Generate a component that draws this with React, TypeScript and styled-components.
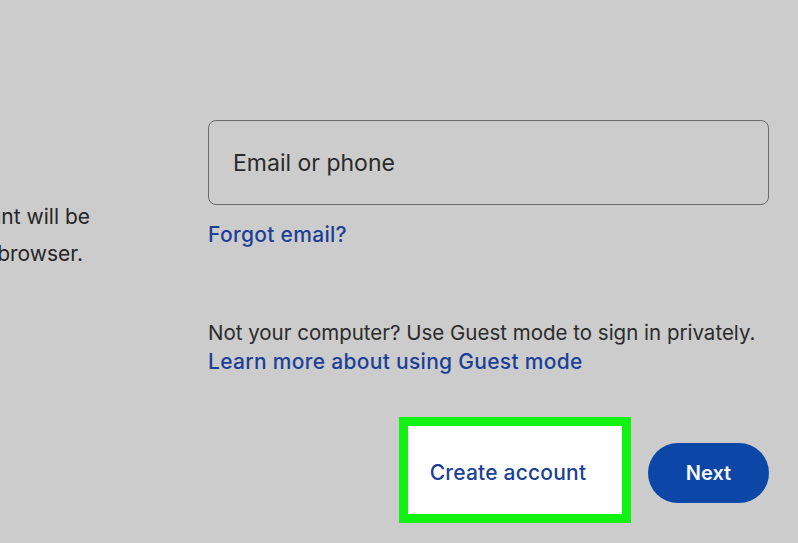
import React from "react";
import styled, { createGlobalStyle } from "styled-components";

const Global = createGlobalStyle`
  html, body {
    margin: 0;
    padding: 0;
    background: #cccccc;
    overflow: hidden;
  }
  body {
    font-family: Inter, Roboto, Arial, sans-serif;
    -webkit-font-smoothing: antialiased;
  }
`;

const Page = styled.main`
  width: 798px;
  height: 543px;
  background: #cccccc;
  display: flex;
  align-items: flex-start;
  overflow: hidden;
`;

const Intro = styled.div`
  width: 90px;
  margin-right: 118px;
  margin-top: 198px;
  display: flex;
  flex-direction: column;
  align-items: flex-end;
`;

const IntroLine = styled.span<{ $inset?: number }>`
  display: block;
  white-space: nowrap;
  font-size: 21px;
  line-height: 37px;
  color: #262626;
  margin-right: ${(p) => p.$inset ?? 0}px;
`;

const Form = styled.section`
  width: 561px;
  margin-top: 120px;
  display: flex;
  flex-direction: column;
`;

const Field = styled.div`
  box-sizing: border-box;
  height: 85px;
  border: 1.5px solid #6b6b6b;
  border-radius: 8px;
  display: flex;
  align-items: center;
  padding-left: 24px;
  font-size: 23px;
  color: #2a2a2a;
`;

const LinkText = styled.a`
  display: block;
  font-size: 21px;
  font-weight: 500;
  letter-spacing: 0.3px;
  color: #1c3f96;
  text-decoration: none;
  line-height: 29px;
`;

const Forgot = styled(LinkText)`
  margin-top: 15px;
  align-self: flex-start;
`;

const Guest = styled.div`
  margin-top: 69px;
  display: flex;
  flex-direction: column;
`;

const GuestText = styled.p`
  margin: 0;
  font-size: 20.5px;
  line-height: 29px;
  color: #2b2b2b;
`;

const Actions = styled.div`
  margin-top: 41px;
  display: flex;
  justify-content: flex-end;
  align-items: center;
  gap: 17px;
`;

const Highlight = styled.div`
  box-sizing: border-box;
  width: 232px;
  height: 106px;
  border: 9px solid #12f212;
  background: #ffffff;
  display: flex;
  align-items: center;
  justify-content: center;
`;

const TextButton = styled.button`
  border: none;
  background: transparent;
  font-family: inherit;
  font-size: 21px;
  font-weight: 500;
  letter-spacing: 0.2px;
  color: #1c3f96;
  padding: 0;
  margin-top: 4px;
  margin-right: 14px;
  cursor: pointer;
`;

const PrimaryButton = styled.button`
  width: 121px;
  height: 60px;
  border: none;
  border-radius: 30px;
  background: #0c46a6;
  color: #f4f6fb;
  font-family: inherit;
  font-size: 20px;
  font-weight: 600;
  margin-top: 6px;
  cursor: pointer;
`;

export default function App() {
  return (
    <>
      <Global />
      <Page>
        <Intro>
          <IntroLine>Use your Google Account. The account will be</IntroLine>
          <IntroLine $inset={7}>added to Chrome and this browser.</IntroLine>
        </Intro>
        <Form>
          <Field>Email or phone</Field>
          <Forgot href="#">Forgot email?</Forgot>
          <Guest>
            <GuestText>Not your computer? Use Guest mode to sign in privately.</GuestText>
            <LinkText href="#">Learn more about using Guest mode</LinkText>
          </Guest>
          <Actions>
            <Highlight>
              <TextButton>Create account</TextButton>
            </Highlight>
            <PrimaryButton>Next</PrimaryButton>
          </Actions>
        </Form>
      </Page>
    </>
  );
}
